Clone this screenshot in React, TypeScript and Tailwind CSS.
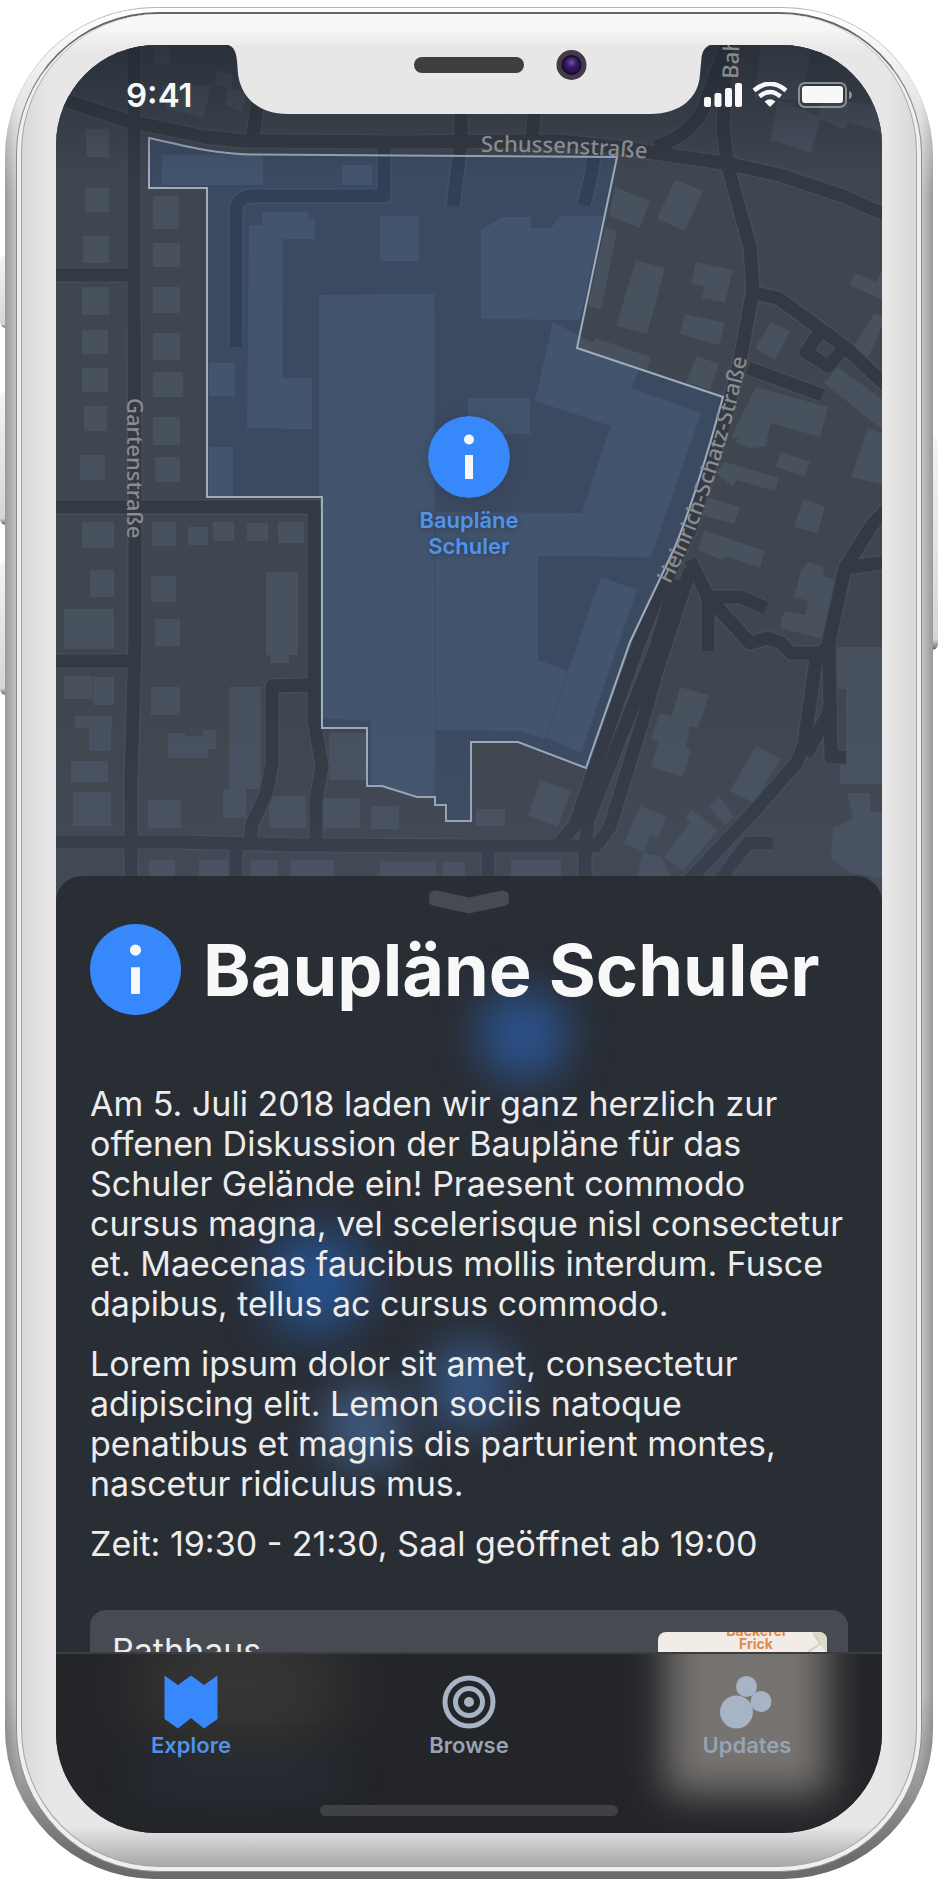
import type { ReactNode } from "react";

const areaPath =
  "M149 138 C185 146 215 154 254 154.500 L617 157 L577 348 L723 397 L711 440 Q692 505 675 547 L630 642 L586 768 L518 742 H471 V821 H446 V805 H435 V797 H417 L382 786 H367 V728 H322 V497 H207 V188 H149 Z";

const roads = [
  "M40 92 L128 121 L205 137 L245 141 L400 142 L560 141 L625 148 L655 153 L730 164 L780 175 L843 196 L895 219",
  "M134 40 V300 L135 500 V640 L131 780 V900",
  "M40 275 H134",
  "M40 507 H320",
  "M40 661 H135",
  "M314 507 V720 L322 766 L316 800 V846",
  "M314 685 L272 686 V764 L266 794 L252 824 L250 845",
  "M40 842 H180 L300 845 L468 846 H600",
  "M236 846 V900",
  "M488 846 V900",
  "M585 846 V900",
  "M258 100 L252 142",
  "M461 100 V142 L453 206",
  "M535 100 L532 140",
  "M595 146 L592 172 L584 205",
  "M384 142 V196 H254 Q236 196 236 212 V347",
  "M728 40 L703 110 Q688 137 655 147",
  "M727 40 L723 130 L728 167 L750 247 L753 290 L740 360 L722 430 L705 480 L690 530 L664 585",
  "M664 580 L640 640 L622 690 L575 825 L558 845",
  "M676 580 L655 650 L588 820 L585 848",
  "M690 570 L656 673 L645 713 L610 827 L597 845",
  "M690 560 L708 597 L750 643 L768 638 L781 643 L791 653 L818 653",
  "M708 597 L741 597 L766 608",
  "M708 597 V651",
  "M895 500 L872 525 L845 568 L828 645 L816 660 L804 745 L797 762 L758 807 L680 890",
  "M845 568 L895 561",
  "M829 640 L830 710 L806 755",
  "M830 705 L831 757 H846",
  "M773 843 H748 L712 890",
  "M753 293 L778 298 L845 347 L895 394",
  "M820 332 L806 352 L828 366 L845 347",
  "M748 368 L822 395",
];

const houses = [
  [86, 129, 23, 28], [85, 188, 24, 24], [83, 236, 26, 27], [82, 287, 27, 28], [82, 330, 26, 24],
  [82, 368, 26, 24], [84, 406, 23, 25], [153, 196, 26, 33], [153, 243, 27, 24], [153, 287, 27, 26],
  [153, 333, 27, 27], [153, 372, 30, 25], [153, 417, 27, 28], [80, 455, 25, 25], [155, 457, 25, 25],
  [82, 522, 32, 26], [152, 522, 24, 24], [188, 527, 20, 18], [213, 522, 21, 19], [247, 523, 21, 18],
  [278, 522, 26, 21], [90, 570, 24, 27], [64, 609, 50, 40], [151, 576, 25, 26], [155, 619, 25, 27],
  [266, 572, 32, 83], [270, 653, 19, 10], [64, 676, 28, 23], [93, 677, 21, 28], [151, 687, 29, 28],
  [229, 687, 32, 102], [75, 716, 37, 12], [89, 728, 22, 23], [71, 761, 37, 21], [73, 792, 38, 34],
  [148, 800, 33, 28], [223, 789, 23, 29], [269, 796, 37, 32], [324, 798, 36, 30], [371, 806, 28, 23],
  [329, 733, 37, 47], [149, 860, 26, 30], [199, 860, 30, 30], [251, 860, 27, 30], [291, 860, 43, 30],
  [380, 861, 56, 30], [443, 862, 22, 30], [162, 155, 101, 30], [342, 165, 30, 20], [380, 216, 39, 45],
  [282, 378, 30, 51], [209, 363, 26, 33], [209, 447, 24, 49], [468, 398, 62, 36], [476, 809, 29, 17],
  [511, 860, 50, 30], [153, 45, 17, 20],
];

const blocks = [
  "168,733 185,733 185,736 203,736 203,730 216,730 216,749 208,749 208,758 168,758",
  "262,212 308,212 308,219 315,219 315,239 283,239 282,428 247,428 249,225 262,225",
  "319,295 434,294 435,797 417,797 382,786 371,784 371,721 319,718",
  "435,512 582,513 606,440 611,426 535,401 553,322 640,368 631,388 701,413 651,557 538,556 538,660 568,671 545,739 518,731 435,730",
  "601,577 637,590 581,753 545,737",
  "481,230 503,217 531,217 531,228 551,228 560,216 603,216 580,320 481,319",
  "615,187 650,201 640,228 609,216",
  "675,180 703,191 685,231 657,219",
  "605,228 617,231 601,310 588,306",
  "636,260 665,268 647,334 616,326",
  "696,262 733,270 725,303 702,298 705,287 691,283",
  "685,314 725,323 719,345 680,334",
  "595,338 651,357 647,370 590,350",
  "697,356 719,364 710,390 686,382",
  "771,322 790,331 775,360 755,348",
  "855,273 876,282 883,268 883,300 849,285",
  "875,313 885,318 868,358 853,347",
  "838,367 883,400 883,430 824,383",
  "756,387 828,407 820,437 771,423 765,447 731,437",
  "868,428 883,433 883,485 851,477",
  "725,462 779,478 775,491 736,480 733,487 716,473",
  "733,440 768,440 765,447 748,448",
  "781,452 810,462 805,477 776,467",
  "708,497 740,507 734,524 701,515",
  "803,499 825,506 818,533 794,527",
  "704,530 765,551 760,568 726,556 722,560 698,550",
  "808,562 824,567 823,576 836,580 822,639 780,628 784,611 805,615 808,601 794,597 801,570",
  "680,687 709,695 698,728 690,726 686,748 691,750 683,777 651,767 658,742 651,738 660,713 672,716",
  "756,745 781,759 754,803 730,791",
  "720,797 734,817 725,825 709,807",
  "691,809 718,830 683,871 664,857 690,822 686,817",
  "640,806 666,816 659,838 650,835 644,852 624,843",
  "643,853 662,857 676,890 634,890",
  "540,780 571,791 558,827 528,816",
  "836,647 883,647 883,784 840,784 840,763 846,763 846,689 836,689",
  "847,793 870,793 870,811 883,812 883,878 851,873 831,858 833,828 853,818",
  "162,85 212,85 203,118 167,108",
  "217,70 233,75 231,88 247,93 242,112 225,105 228,88 215,85",
  "761,40 813,40 801,100 755,98",
  "778,100 821,117 811,153 770,140",
  "821,97 883,107 883,133 848,122 845,130 818,118",
];

function StreetMap() {
  return (
    <svg
      viewBox="56 45 826 860"
      className="absolute inset-x-0 top-0 h-auto w-full bg-[#40464f]"
      role="img"
      aria-label="Karte"
    >
      <defs>
        <linearGradient id="shade" x1="0" y1="0" x2="0" y2="1">
          <stop offset="0" stopColor="#1d232e" stopOpacity=".62" />
          <stop offset="1" stopColor="#1d232e" stopOpacity="0" />
        </linearGradient>
        <linearGradient id="foot" x1="0" y1="0" x2="0" y2="1">
          <stop offset="0" stopColor="#4a5c78" stopOpacity="0" />
          <stop offset="1" stopColor="#4a5c78" stopOpacity=".2" />
        </linearGradient>
        <path id="schatz" d="M670 585 C690 545 700 520 712 485 C727 440 738 400 750 345" />
        <path id="schussen" d="M481 152 Q570 151 660 160" />
      </defs>
      <g fill="#48515e">
        {blocks.map((p) => (
          <polygon key={p} points={p} />
        ))}
        {houses.map(([x, y, w, h]) => (
          <rect key={`${x}-${y}`} x={x} y={y} width={w} height={h} />
        ))}
      </g>
      <path d="M435 294 V797 M568 671 L545 739" stroke="#3f4a59" fill="none" />
      <g fill="none" strokeLinejoin="round">
        <g stroke="#434e59" strokeWidth="16">
          {roads.map((d) => (
            <path key={d} d={d} />
          ))}
        </g>
        <g stroke="#333a43" strokeWidth="13">
          {roads.map((d) => (
            <path key={d} d={d} />
          ))}
        </g>
      </g>
      <path d={areaPath} fill="#296ce1" fillOpacity=".13" stroke="#9eacc0" strokeWidth="2" />
      <rect x="56" y="45" width="826" height="130" fill="url(#shade)" />
      <rect x="56" y="700" width="826" height="200" fill="url(#foot)" />
      <g fill="#8a8b8f" fontSize="22" fontWeight="500" className="font-['Noto_Sans',sans-serif]">
        <text>
          <textPath href="#schussen">Schussenstraße</textPath>
        </text>
        <text transform="translate(127 398) rotate(90)">Gartenstraße</text>
        <text>
          <textPath href="#schatz">Heinrich-Schatz-Straße</textPath>
        </text>
        <text transform="translate(738 79) rotate(-88)">Bahnhof</text>
      </g>
    </svg>
  );
}

function InfoIcon({ className }: { className: string }) {
  return (
    <svg viewBox="0 0 82 82" className={className} aria-hidden="true">
      <circle cx="41" cy="41" r="41" fill="#3788fa" />
      <circle cx="41" cy="23.500" r="5" fill="#f8f8f8" />
      <rect x="37" y="39" width="8" height="24" fill="#f8f8f8" />
    </svg>
  );
}

function Notch() {
  return (
    <svg
      viewBox="214 45 510 70"
      className="absolute -top-px left-1/2 w-[510px] -translate-x-1/2"
      aria-hidden="true"
    >
      <defs>
        <radialGradient id="lens" cx=".5" cy=".35" r=".6">
          <stop offset="0" stopColor="#6d57a0" />
          <stop offset=".5" stopColor="#3a1768" />
          <stop offset="1" stopColor="#26104a" />
        </radialGradient>
      </defs>
      <path
        d="M214 45 H222 C232 45 236 50 237 62 L238 75 C241 98 258 115 288 115 H650 C681 115 699 98 700 75 L701.500 59 C702.500 50 707 45 717 45 H724 Z"
        fill="#e8e6e7"
      />
      <rect x="414" y="58" width="110" height="16" rx="8" fill="#3f3f3f" />
      <circle cx="571.500" cy="66" r="15" fill="#3f3b48" />
      <circle cx="571.500" cy="66" r="10" fill="#150b22" />
      <circle cx="571.500" cy="66" r="8.500" fill="url(#lens)" />
    </svg>
  );
}

function StatusIcons() {
  return (
    <svg viewBox="0 0 150 26" className="h-[26px] w-[150px]" fill="#f8f8f8" aria-hidden="true">
      <rect x="1" y="15" width="7" height="10" rx="2" />
      <rect x="11.500" y="11" width="7" height="14" rx="2" />
      <rect x="22" y="6" width="7" height="19" rx="2" />
      <rect x="32" y="1" width="7" height="24" rx="2" />
      <path d="M67 25 L61.500 19.500 Q67 15 72.500 19.500 Z" />
      <path d="M56.500 14.500 Q67 5.500 77.500 14.500" fill="none" stroke="#f8f8f8" strokeWidth="4.500" />
      <path d="M51 8.500 Q67 -5 83 8.500" fill="none" stroke="#f8f8f8" strokeWidth="4.500" />
      <rect x="96" y="1" width="47" height="24" rx="6" fill="none" stroke="#8b8f96" strokeWidth="2" />
      <rect x="99" y="4" width="41" height="17" rx="3" />
      <path d="M146 9 Q149 10 149 13 Q149 16 146 17 Z" fill="#8b8f96" />
    </svg>
  );
}

function Tab({ label, active, children }: { label: string; active?: boolean; children: ReactNode }) {
  return (
    <a
      href={`#${label.toLowerCase()}`}
      aria-current={active ? "page" : undefined}
      className={`flex flex-col items-center gap-1 text-[22px] leading-6 font-semibold ${
        active ? "text-[#4f93ea]" : "text-[#97a4b6]"
      }`}
    >
      <svg viewBox="0 0 54 54" className="size-[54px]" aria-hidden="true">
        {children}
      </svg>
      {label}
    </a>
  );
}

const glows = [
  "top-[113px] left-[421px] size-[92px] bg-[#2c5a9f]/80 blur-[22px]",
  "top-[354px] left-[208px] size-[104px] bg-[#275ba4]/80 blur-[24px]",
  "top-[509px] left-[266px] size-[84px] bg-[#47699a]/75 blur-[22px]",
  "top-[465px] left-[370px] size-[88px] bg-[#3b639c]/75 blur-[22px]",
];

export default function App() {
  return (
    <div className="relative overflow-hidden bg-white px-[5px] pt-[7px] pb-[2px] font-['Inter','Liberation_Sans',sans-serif]">
      <span className="absolute top-[255px] left-0 h-[73px] w-3 rounded-l-md bg-gradient-to-b from-[#f4f4f4] via-[#d6d6d6] via-95% to-[#666]" />
      <span className="absolute top-[391px] left-0 h-[134px] w-3 rounded-l-md bg-gradient-to-b from-[#f4f4f4] via-[#d6d6d6] via-95% to-[#666]" />
      <span className="absolute top-[561px] left-0 h-[134px] w-3 rounded-l-md bg-gradient-to-b from-[#f4f4f4] via-[#d6d6d6] via-95% to-[#666]" />
      <span className="absolute top-[438px] right-0 h-[212px] w-3 rounded-r-md bg-gradient-to-b from-[#f4f4f4] via-[#d6d6d6] via-95% to-[#666]" />

      <div className="relative rounded-[150px] border-t border-[#b5b5b5] bg-[linear-gradient(to_bottom,#fff_0,#ffffff00_10%,#6b6b6b00_90%,#6b6b6b_99%),linear-gradient(to_right,#999_0,#cfcfcf_14px,#cfcfcf_calc(100%-14px),#999_100%)] px-[11px] pt-1 pb-[7px]">
        <div className="rounded-[142px] border border-t-2 border-[#8d8d8d] border-t-[#666] bg-[#efefef] px-[4px] pb-1">
          <div className="rounded-[138px] border-x border-b border-[#a5a4a5] bg-[linear-gradient(to_bottom,#f8f8f8_0,#f6f6f6_16px,#e8e6e700_38px,#e2e0e100_calc(100%-40px),#a9a8a8_100%),linear-gradient(to_right,#d9d7d8_0,#e8e6e7_28px,#e8e6e7_calc(100%-28px),#d9d7d8_100%)] px-[34px] pt-[31px] pb-[33px]">
            <main className="relative overflow-hidden rounded-[100px] bg-[#40464f]">
              <StreetMap />
              <Notch />

              <header className="relative flex h-[100px] items-center justify-between pr-[29px] pl-[70px]">
                <time className="text-[33px] leading-10 font-semibold text-[#f8f8f8]">9:41</time>
                <StatusIcons />
              </header>

              <section className="relative flex flex-col items-center pt-[271px] pb-[317px]">
                <button
                  type="button"
                  className="flex flex-col items-center gap-[9px] text-[22px] leading-[26px] font-semibold text-[#5293ea] [text-shadow:0_1px_6px_#2b3a50]"
                >
                  <InfoIcon className="size-[82px] rounded-full shadow-[0_2px_14px_#2b3a5080]" />
                  <span>
                    Baupläne
                    <br />
                    Schuler
                  </span>
                </button>
              </section>

              <article className="relative isolate overflow-hidden rounded-t-[26px] bg-[#292d34] px-[34px] pt-[14px]">
                {glows.map((glow) => (
                  <span key={glow} className={`absolute -z-10 rounded-full ${glow}`} />
                ))}
                <button type="button" aria-label="Schließen" className="mx-auto block">
                  <svg viewBox="0 0 80 24" className="h-6 w-20" aria-hidden="true">
                    <path
                      d="M8 .500 L40 7.500 L72 .500 Q80 0 80 7 V11 Q80 15 75 16 L40 23.500 L5 16 Q0 15 0 11 V7 Q0 0 8 .500 Z"
                      fill="#474a50"
                    />
                  </svg>
                </button>

                <div className="mt-[10px] flex items-center gap-[22px]">
                  <InfoIcon className="size-[91px] shrink-0" />
                  <h1 className="text-[72px] leading-[91px] font-bold whitespace-nowrap text-[#f8f8f8]">
                    Baupläne Schuler
                  </h1>
                </div>

                <div className="mt-[69px] flex flex-col gap-5 text-[34px] leading-10 whitespace-nowrap text-[#ececec]">
                  <p>
                    Am 5. Juli 2018 laden wir ganz herzlich zur
                    <br />
                    offenen Diskussion der Baupläne für das
                    <br />
                    Schuler Gelände ein! Praesent commodo
                    <br />
                    cursus magna, vel scelerisque nisl consectetur
                    <br />
                    et. Maecenas faucibus mollis interdum. Fusce
                    <br />
                    dapibus, tellus ac cursus commodo.
                  </p>
                  <p>
                    Lorem ipsum dolor sit amet, consectetur
                    <br />
                    adipiscing elit. Lemon sociis natoque
                    <br />
                    penatibus et magnis dis parturient montes,
                    <br />
                    nascetur ridiculus mus.
                  </p>
                  <p>Zeit: 19:30 - 21:30, Saal geöffnet ab 19:00</p>
                </div>

                <div className="mt-[46px] flex h-[42px] items-start justify-between overflow-hidden rounded-t-[16px] bg-[#474a51] pt-[22px] pr-[21px] pl-[22px] text-[#ececec]">
                  <h2 className="-mt-px text-[34px] leading-10">Rathhaus</h2>
                  <div className="relative h-24 w-[169px] overflow-hidden rounded-lg bg-[#f1ece5]">
                    <svg viewBox="0 0 169 96" className="absolute inset-0" aria-hidden="true">
                      <path d="M154 0 H169 V22 Z" fill="#dcdacb" />
                      <path d="M150 20 L162 12 L156 2" stroke="#d5d1bf" strokeWidth="2" fill="none" />
                    </svg>
                    <p className="relative -mt-2 pl-[27px] text-center text-[14px] leading-[13px] font-bold text-[#dd8a50]">
                      Bäckerei
                      <br />
                      Frick
                    </p>
                  </div>
                </div>
              </article>

              <nav className="relative isolate flex h-[181px] flex-col justify-between overflow-hidden border-t-2 border-[#3a3d40] bg-[#232528] pt-[21px] pb-[17px]">
                <span className="absolute -top-8 left-20 -z-10 h-32 w-52 rounded-full bg-[#3b3a38]/80 blur-[32px]" />
                <span className="absolute top-28 left-20 -z-10 h-8 w-52 rounded-full bg-[#27303f]/70 blur-[18px]" />
                <span className="absolute -top-10 right-[54px] -z-10 h-[180px] w-[162px] bg-[#767370] blur-[19px]" />
                <div className="-mx-1 grid grid-cols-3">
                  <Tab label="Explore" active>
                    <path d="M.500 .500 L14 10 L27 .500 L40 10 L53.500 .500 V44 L40 53.500 L27 43 L14 53.500 L.500 44 Z" fill="#3788fa" />
                  </Tab>
                  <Tab label="Browse">
                    <g fill="none" stroke="#a7b4c6" strokeWidth="5">
                      <circle cx="27" cy="27" r="24" />
                      <circle cx="27" cy="27" r="13.500" />
                    </g>
                    <circle cx="27" cy="27" r="5" fill="#a7b4c6" />
                  </Tab>
                  <Tab label="Updates">
                    <g fill="#a7b4c6">
                      <circle cx="16.500" cy="37" r="16.500" />
                      <circle cx="26.500" cy="11.500" r="10.500" />
                      <circle cx="41" cy="26.500" r="10.500" />
                    </g>
                  </Tab>
                </div>
                <span className="mx-auto h-[11px] w-[298px] rounded-full bg-[#404143]" />
              </nav>
            </main>
          </div>
        </div>
      </div>
    </div>
  );
}
